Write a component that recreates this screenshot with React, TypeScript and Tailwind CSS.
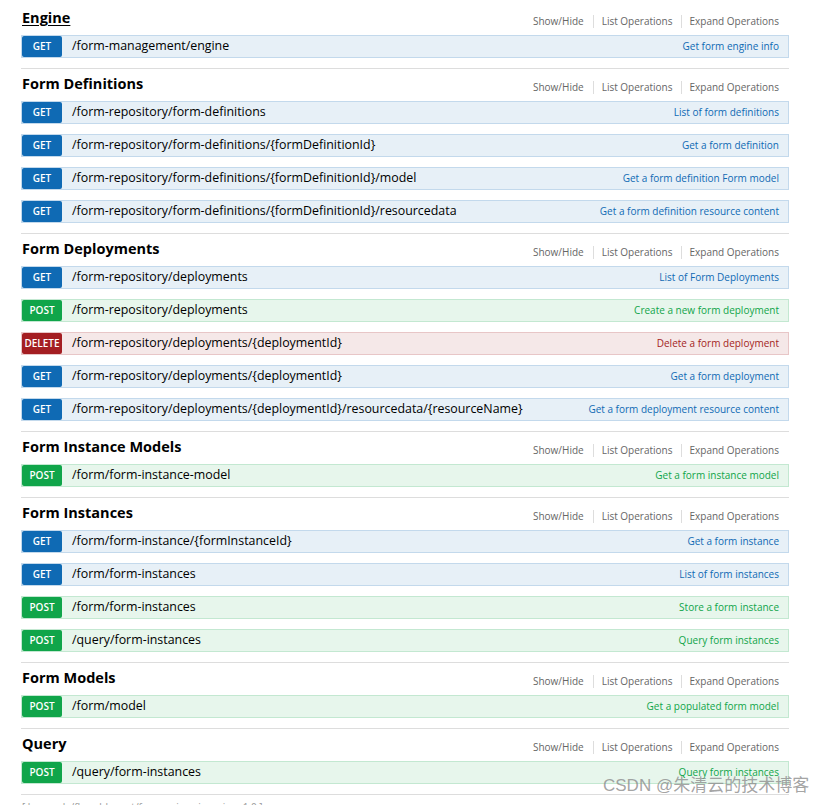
import React from 'react';

type Method = 'GET' | 'POST' | 'DELETE';

type Op = { method: Method; path: string; summary: string };

type Section = { name: string; ops: Op[]; underline?: boolean };

const sections: Section[] = [
  {
    name: 'Engine',
    underline: true,
    ops: [{ method: 'GET', path: '/form-management/engine', summary: 'Get form engine info' }],
  },
  {
    name: 'Form Definitions',
    ops: [
      { method: 'GET', path: '/form-repository/form-definitions', summary: 'List of form definitions' },
      { method: 'GET', path: '/form-repository/form-definitions/{formDefinitionId}', summary: 'Get a form definition' },
      { method: 'GET', path: '/form-repository/form-definitions/{formDefinitionId}/model', summary: 'Get a form definition Form model' },
      { method: 'GET', path: '/form-repository/form-definitions/{formDefinitionId}/resourcedata', summary: 'Get a form definition resource content' },
    ],
  },
  {
    name: 'Form Deployments',
    ops: [
      { method: 'GET', path: '/form-repository/deployments', summary: 'List of Form Deployments' },
      { method: 'POST', path: '/form-repository/deployments', summary: 'Create a new form deployment' },
      { method: 'DELETE', path: '/form-repository/deployments/{deploymentId}', summary: 'Delete a form deployment' },
      { method: 'GET', path: '/form-repository/deployments/{deploymentId}', summary: 'Get a form deployment' },
      { method: 'GET', path: '/form-repository/deployments/{deploymentId}/resourcedata/{resourceName}', summary: 'Get a form deployment resource content' },
    ],
  },
  {
    name: 'Form Instance Models',
    ops: [{ method: 'POST', path: '/form/form-instance-model', summary: 'Get a form instance model' }],
  },
  {
    name: 'Form Instances',
    ops: [
      { method: 'GET', path: '/form/form-instance/{formInstanceId}', summary: 'Get a form instance' },
      { method: 'GET', path: '/form/form-instances', summary: 'List of form instances' },
      { method: 'POST', path: '/form/form-instances', summary: 'Store a form instance' },
      { method: 'POST', path: '/query/form-instances', summary: 'Query form instances' },
    ],
  },
  {
    name: 'Form Models',
    ops: [{ method: 'POST', path: '/form/model', summary: 'Get a populated form model' }],
  },
  {
    name: 'Query',
    ops: [{ method: 'POST', path: '/query/form-instances', summary: 'Query form instances' }],
  },
];

const styles: Record<Method, { row: string; badge: string; text: string }> = {
  GET: { row: 'bg-[#e7f0f7] border-[#c3d9ec]', badge: 'bg-[#0f6ab4]', text: 'text-[#0f6ab4]' },
  POST: { row: 'bg-[#e7f6ec] border-[#c3e8d1]', badge: 'bg-[#10a54a]', text: 'text-[#10a54a]' },
  DELETE: { row: 'bg-[#f5e8e8] border-[#e8c6c7]', badge: 'bg-[#a41e22]', text: 'text-[#a41e22]' },
};

export default function App() {
  return (
    <div
      className="relative min-h-[805px] bg-white pt-[3px] overflow-hidden"
      style={{ fontFamily: '"Open Sans", "Noto Sans", sans-serif' }}
    >
      <div className="ml-[21px] w-[768px]">
        {sections.map((s) => (
          <ResourceSection key={s.name} section={s} />
        ))}
        <p className="mt-[5px] pl-[1px] text-[10px] text-[#999]">
          [ base url: /flowable-rest/form-api , api version: 1.0 ]
        </p>
      </div>

      {/* watermark */}
      <div
        className="absolute left-[603px] top-[776px] text-[17px] leading-[20px] text-[#8c8c8c]/80 whitespace-nowrap"
        style={{ fontFamily: '"Liberation Sans", "Noto Sans CJK SC", sans-serif' }}
      >
        CSDN @朱清云的技术博客
      </div>
    </div>
  );
}

function ResourceSection({ section }: { section: Section }) {
  return (
    <div className="border-b border-[#ddd] pt-[3px] pb-[10px]">
      <div className="flex h-[24px] items-center justify-between mb-[5px]">
        <h2 className={`pl-[1px] text-[14.5px] font-bold text-black ${section.underline ? 'underline underline-offset-2' : ''}`}>
          {section.name}
        </h2>
        <div className="mt-[6px] flex items-center text-[10px] text-[#666] pr-[10px]">
          <span className="pr-[9px]">Show/Hide</span>
          <span className="border-l border-[#ddd] px-[8px] leading-[13px]">List Operations</span>
          <span className="border-l border-[#ddd] pl-[8px] leading-[13px]">Expand Operations</span>
        </div>
      </div>
      <div className="flex flex-col gap-[10px]">
        {section.ops.map((op, i) => (
          <OperationRow key={i} op={op} />
        ))}
      </div>
    </div>
  );
}

function OperationRow({ op }: { op: Op }) {
  const st = styles[op.method];
  return (
    <div className={`flex h-[23px] items-center border ${st.row}`}>
      <span className={`flex h-[21px] w-[40px] items-center justify-center rounded-[2px] text-[10px] font-semibold text-white ${st.badge}`}>
        {op.method}
      </span>
      <span className="ml-[10px] flex-1 text-[12.4px] text-black whitespace-nowrap">{op.path}</span>
      <span className={`pr-[9px] text-[10px] whitespace-nowrap ${st.text}`}>{op.summary}</span>
    </div>
  );
}
